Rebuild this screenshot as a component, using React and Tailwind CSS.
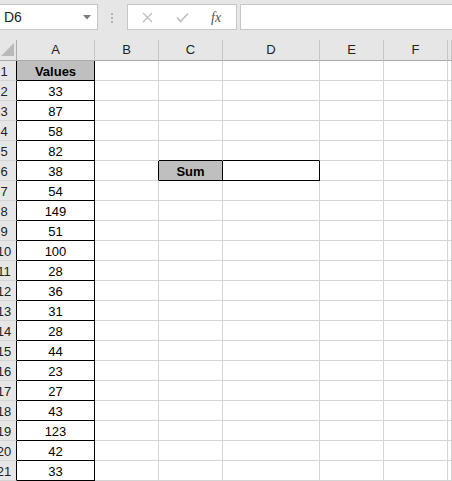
import React from "react";

const values = [33, 87, 58, 82, 38, 54, 149, 51, 100, 28, 36, 31, 28, 44, 23, 27, 43, 123, 42, 33];
const colLetters = ["A", "B", "C", "D", "E", "F", ""];

function Cell({ className = "", children }) {
  return (
    <div className={"h-[20px] border-r border-b flex items-center justify-center pt-[2px] overflow-hidden whitespace-nowrap " + className}>
      {children}
    </div>
  );
}

export default function App() {
  const rows = [];
  for (let r = 1; r <= 22; r++) {
    rows.push(r);
  }
  return (
    <div
      className="w-[452px] h-[481px] overflow-hidden bg-white text-[13px] text-black"
      style={{ fontFamily: '"Liberation Sans", Arial, sans-serif' }}
    >
      {/* Formula bar */}
      <div className="h-[40px] bg-[#e6e6e6] flex items-start pt-[4px]">
        <div className="-ml-px w-[99px] h-[26px] bg-white border border-[#c6c6c6] flex items-center justify-between pl-[4px] pr-[6px]">
          <span className="text-[#222] text-[14px]">D6</span>
          <svg width="8" height="5" viewBox="0 0 8 5">
            <path d="M0 0 L8 0 L4 4.5 Z" fill="#7a7a7a" />
          </svg>
        </div>
        <div className="ml-[13px] mt-[9px] flex flex-col gap-[2px]">
          <div className="w-[2px] h-[2px] bg-[#b4b4b4]" />
          <div className="w-[2px] h-[2px] bg-[#b4b4b4]" />
          <div className="w-[2px] h-[2px] bg-[#b4b4b4]" />
        </div>
        <div className="ml-[14px] w-[110px] h-[26px] bg-white border border-[#c6c6c6] flex items-center">
          <svg className="ml-[14px]" width="11" height="11" viewBox="0 0 11 11">
            <path d="M1 1 L10 10 M10 1 L1 10" stroke="#bdbdbd" strokeWidth="1.3" fill="none" />
          </svg>
          <svg className="ml-[23px]" width="13" height="11" viewBox="0 0 13 11">
            <path d="M1 5.5 L4.5 9.5 L12 1.5" stroke="#bdbdbd" strokeWidth="1.6" fill="none" />
          </svg>
          <span
            className="ml-[22px] italic text-[14px] text-[#555]"
            style={{ fontFamily: '"Liberation Serif", "Times New Roman", serif' }}
          >
            fx
          </span>
        </div>
        <div className="ml-[3px] flex-1 -mr-px h-[26px] bg-white border border-[#c6c6c6]" />
      </div>

      {/* Grid */}
      <div className="grid grid-cols-[17px_78px_64px_64px_97px_64px_64px_1fr]">
        {/* Header row */}
        <div className="h-[21px] bg-[#e6e6e6] border-r border-b border-r-[#ababab] border-b-[#ababab] relative overflow-hidden">
          <svg className="absolute left-[1px] top-[3px]" width="13" height="13" viewBox="0 0 13 13">
            <path d="M13 0 L13 13 L0 13 Z" fill="#b9b9b9" />
          </svg>
        </div>
        {colLetters.map((c, i) => (
          <div
            key={"h" + i}
            className="h-[21px] bg-[#e6e6e6] border-r border-b border-r-[#c6c6c6] border-b-[#ababab] flex items-center justify-center text-[#222] text-[13px]"
          >
            {c}
          </div>
        ))}

        {rows.map((r) => {
          const inA = r >= 1 && r <= 21;
          return (
            <React.Fragment key={r}>
              <div
                className={
                  "h-[20px] bg-[#e6e6e6] border-r border-b border-b-[#d4d4d4] overflow-hidden " +
                  (inA ? "border-r-black" : "border-r-[#ababab]")
                }
              >
                <div className="-ml-[9px] w-[26px] h-full flex items-center justify-center pt-[2px] text-[#222] text-[13px]">
                  {r}
                </div>
              </div>
              {/* A */}
              <Cell
                className={
                  (inA ? "border-r-black border-b-black " : "border-r-[#d4d4d4] border-b-[#d4d4d4] ") +
                  (r === 1 ? "bg-[#bfbfbf] font-bold" : "bg-white")
                }
              >
                {r === 1 ? "Values" : inA ? values[r - 2] : ""}
              </Cell>
              {/* B */}
              <Cell className={"border-b-[#d4d4d4] " + (r === 6 ? "border-r-black" : "border-r-[#d4d4d4]")} />
              {/* C */}
              <Cell
                className={
                  (r === 6
                    ? "border-r-black border-b-black bg-[#bfbfbf] font-bold"
                    : "border-r-[#d4d4d4] " + (r === 5 ? "border-b-black" : "border-b-[#d4d4d4]"))
                }
              >
                {r === 6 ? "Sum" : ""}
              </Cell>
              {/* D */}
              <Cell
                className={
                  r === 6
                    ? "border-r-black border-b-black"
                    : "border-r-[#d4d4d4] " + (r === 5 ? "border-b-black" : "border-b-[#d4d4d4]")
                }
              />
              <Cell className="border-r-[#d4d4d4] border-b-[#d4d4d4]" />
              <Cell className="border-r-[#d4d4d4] border-b-[#d4d4d4]" />
              <Cell className="border-r-[#d4d4d4] border-b-[#d4d4d4]" />
            </React.Fragment>
          );
        })}
      </div>
    </div>
  );
}
